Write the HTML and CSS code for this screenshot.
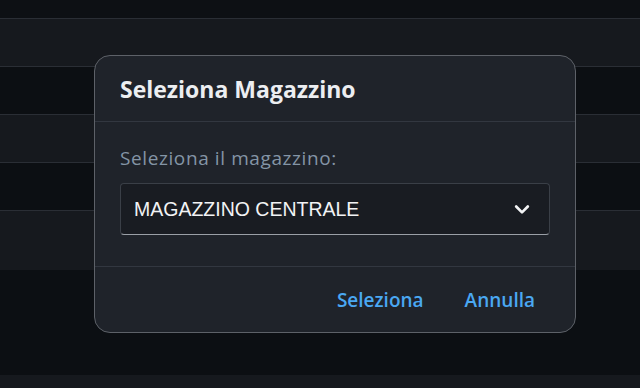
FILE: index.html
```html
<!DOCTYPE html>
<html lang="it">
<head>
  <meta charset="UTF-8">
  <meta name="viewport" content="width=device-width, initial-scale=1.0">
  <title>Seleziona Magazzino</title>
  <link rel="stylesheet" href="styles.css">
</head>
<body>
  <div class="page">
    <div class="topbar"></div>
    <div class="row light"></div>
    <div class="row dark"></div>
    <div class="row light"></div>
    <div class="row dark"></div>
    <div class="row light tall"></div>
    <div class="spacer"></div>
    <div class="row light last"></div>
  </div>

  <div class="overlay">
    <div class="modal">
      <div class="modal-header">
        <h2>Seleziona Magazzino</h2>
      </div>
      <div class="modal-body">
        <label class="field-label">Seleziona il magazzino:</label>
        <div class="select">
          <span>MAGAZZINO CENTRALE</span>
          <svg class="chevron" width="20" height="20" viewBox="0 0 24 24" fill="none" stroke="currentColor" stroke-width="3.2" stroke-linecap="round" stroke-linejoin="round">
            <polyline points="5 9 12 16 19 9"></polyline>
          </svg>
        </div>
      </div>
      <div class="modal-footer">
        <button class="btn">Seleziona</button>
        <button class="btn">Annulla</button>
      </div>
    </div>
  </div>
</body>
</html>
```

FILE: styles.css
```css
html, body {
  margin: 0;
  padding: 0;
  height: 100%;
}
body {
  font-family: 'Open Sans', 'Noto Sans', sans-serif;
  background: #0d1014;
  overflow: hidden;
}
.page {
  display: flex;
  flex-direction: column;
  height: 100%;
  overflow: hidden;
}
.page > div {
  flex-shrink: 0;
}
.topbar {
  height: 18px;
  background: #0d1014;
}
.row {
  height: 47px;
  border-top: 1px solid #2a2e35;
}
.row.light {
  background: #16191e;
}
.row.dark {
  background: #0c0f13;
}
.row.tall {
  height: 59px;
}
.row.last {
  height: 13px;
  border-top: none;
}
.spacer {
  height: 105px;
  background: #0c0f13;
}
.overlay {
  position: absolute;
  inset: 0;
}
.modal {
  position: absolute;
  left: 94px;
  top: 55px;
  width: 480px;
  background: #1f232a;
  border: 1px solid #5d6168;
  border-radius: 16px;
  color: #e9ecef;
}
.modal-header {
  height: 65px;
  padding: 0 25px;
  display: flex;
  align-items: center;
  border-bottom: 1px solid #323740;
}
.modal-header h2 {
  margin: 0;
  font-size: 23px;
  font-weight: 700;
  color: #eceef1;
}
.modal-body {
  padding: 23px 25px 31px;
  border-bottom: 1px solid #323740;
}
.field-label {
  display: block;
  font-size: 19px;
  letter-spacing: 0.6px;
  line-height: 26px;
  color: #8495a6;
  margin-bottom: 12px;
}
.select {
  height: 50px;
  border: 1px solid #3a3f47;
  border-bottom-color: #9a9fa6;
  border-radius: 4px;
  background: #191c22;
  display: flex;
  align-items: center;
  justify-content: space-between;
  padding: 0 17px 0 13px;
  font-family: 'Liberation Sans', Arial, sans-serif;
  font-size: 19.5px;
  color: #f2f3f5;
}
.chevron {
  color: #f2f3f5;
}
.modal-footer {
  height: 65px;
  display: flex;
  justify-content: flex-end;
  align-items: center;
  gap: 21px;
  padding: 0 30px;
}
.btn {
  background: none;
  border: none;
  padding: 8px 10px;
  font-family: 'Open Sans', 'Noto Sans', sans-serif;
  font-size: 19px;
  font-weight: 600;
  color: #4aa8f2;
  cursor: pointer;
}
```
